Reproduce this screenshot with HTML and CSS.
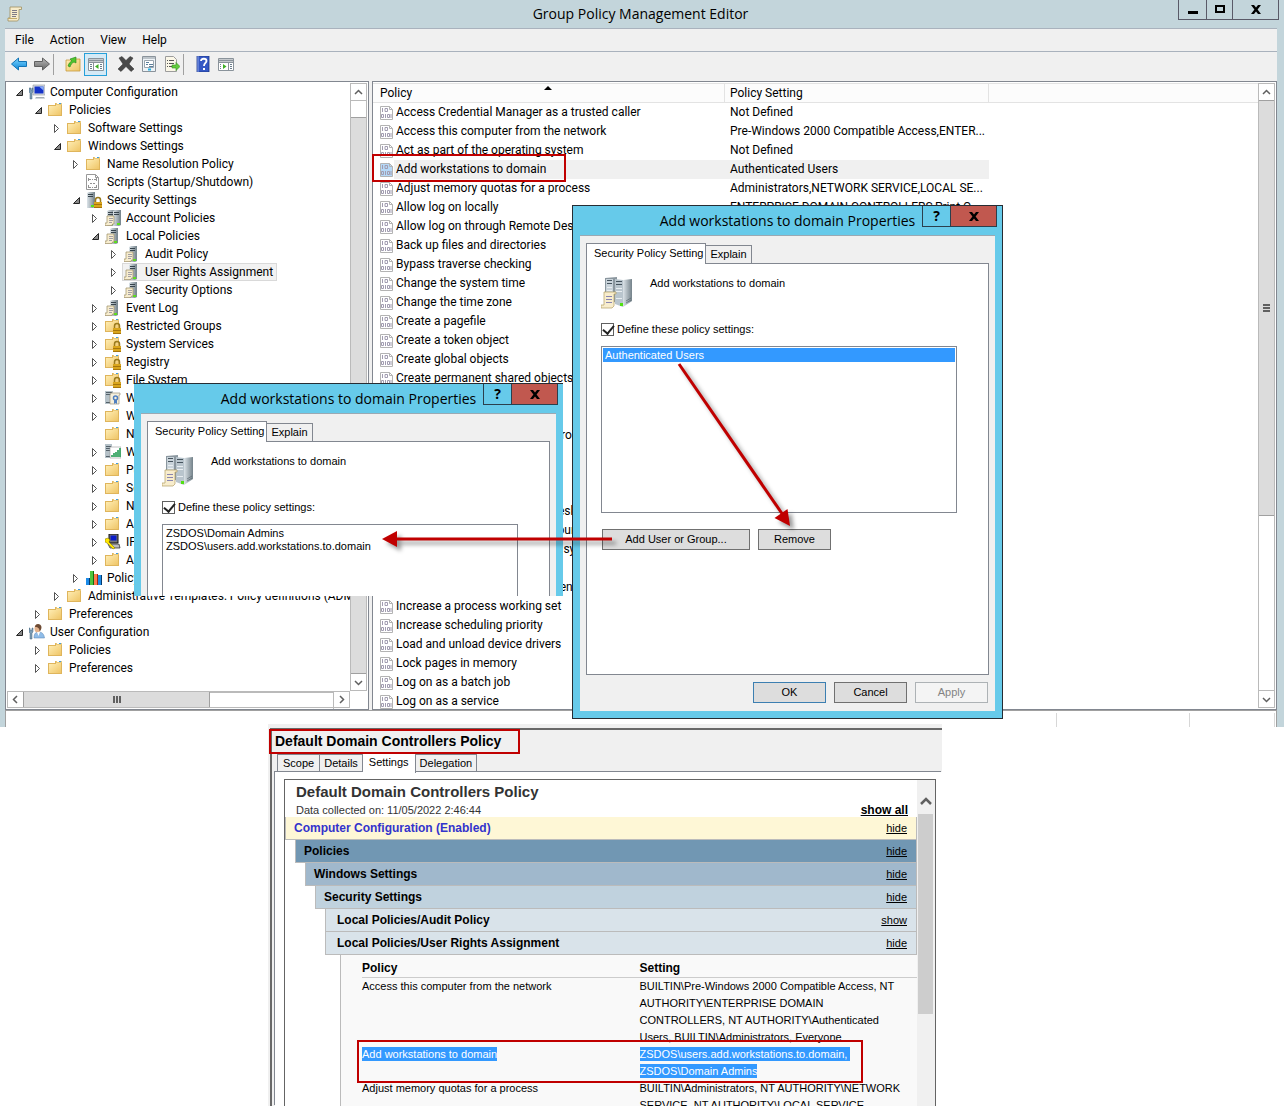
FILE: index.html
```
<!DOCTYPE html>
<html lang="en">
<head>
    <meta charset="UTF-8">
    <title>Group Policy Management Editor</title>
    <link rel="stylesheet" href="styles.css">
</head>
<body>
<!-- icon set -->
<svg class="defs" width="0" height="0" aria-hidden="true">
    <defs>
        <linearGradient id="gold" x1="0" y1="0" x2="1" y2="1"><stop offset="0" stop-color="#ffeeb5"/><stop offset="1" stop-color="#efc567"/></linearGradient>
        <linearGradient id="steel" x1="0" y1="0" x2="1" y2="0"><stop offset="0" stop-color="#dbe3e8"/><stop offset="1" stop-color="#74828a"/></linearGradient>
        <linearGradient id="sky" x1="0" y1="0" x2="0" y2="1"><stop offset="0" stop-color="#7fd6ff"/><stop offset="1" stop-color="#0a86d8"/></linearGradient>
        <linearGradient id="grey" x1="0" y1="0" x2="0" y2="1"><stop offset="0" stop-color="#bbb"/><stop offset="1" stop-color="#666"/></linearGradient>
    </defs>
    <symbol id="folder" viewBox="0 0 16 16">
        <path d="M0 3h7V1h7v13H0z" fill="#dfb55c"/><path d="M1 4h7V3h5v10H1z" fill="url(#gold)"/>
        <path d="M8 1h6v2H8z" fill="#e9c878"/><path d="M9 1h2v1H9z" fill="#fff"/><path d="M11 1h2v1h-2z" fill="#3f9be0"/>
    </symbol>
    <symbol id="lock" viewBox="0 0 16 16">
        <path d="M9.500 10V8a2.500 2.500 0 0 1 5 0v2" fill="none" stroke="#9a7a1d" stroke-width="1.500"/><path d="M8 10h8v6H8z" fill="#d9a51c"/><path d="M8 12.500h8M8 15.500h8" stroke="#a6750c"/>
    </symbol>
    <symbol id="folderlock" viewBox="0 0 16 16"><use href="#folder"/><use href="#lock"/></symbol>
    <symbol id="tower" viewBox="0 0 16 16">
        <path d="M5 1l2-1h6v15l-2 1H5z" fill="url(#steel)"/><path d="M6 2.500h5M6 4.500h5" stroke="#37444c"/><path d="M12 1v14" stroke="#7d8b93"/><path d="M9 13h3v2H9z" fill="#5be01a"/>
    </symbol>
    <symbol id="scroll" viewBox="0 0 16 16">
        <path d="M2 6h7v8H7.500L7 15.500H0V13h2z" fill="#f7edcf" stroke="#9c8c63" stroke-width=".7"/><path d="M4 8.500h4M4 10.500h4M4 12.500h3" stroke="#8e8a9a" stroke-width=".8"/>
    </symbol>
    <symbol id="server" viewBox="0 0 16 16"><use href="#tower"/><use href="#scroll"/></symbol>
    <symbol id="servers" viewBox="0 0 16 16"><use href="#tower" x="-3"/><use href="#tower" x="3"/><use href="#scroll"/></symbol>
    <symbol id="serverlock" viewBox="0 0 16 16"><use href="#tower" x="-4"/><use href="#lock"/></symbol>
    <symbol id="script" viewBox="0 0 16 16">
        <path d="M.5.500h9l3 3v12H.5z" fill="#fff" stroke="#999"/><path d="M9.500.500v3h3" fill="none" stroke="#999"/><path d="M3 5.500h2M6 5.500h1M8 5.500h2M3 13.500h2M6 13.500h1M8 13.500h2M2.500 4v3M10.500 4v3M2.500 11v3M10.500 11v3M4 9.500h2M7 9.500h2" stroke="#777" stroke-width=".8"/>
    </symbol>
    <symbol id="computer" viewBox="0 0 16 16">
        <path d="M4 1h12v10H4z" fill="#d9dde2" stroke="#8d969e" stroke-width=".6"/><path d="M5.500 2.500h9v7h-9z" fill="#1533c9"/><path d="M10 2.500h4.500v4z" fill="#86aaf8"/><path d="M7 13h8l1 1.500H6z" fill="#a3adb5"/><path d="M0 4h2v2h1V4h1v4L3 9v6H1V9L0 8z" fill="#7d9db5" stroke="#46667c" stroke-width=".5"/>
    </symbol>
    <symbol id="user" viewBox="0 0 16 16">
        <path d="M5 14c0-5 2-6 5-6s5 2 5.500 6z" fill="#8fbce8" stroke="#537fae" stroke-width=".5"/><ellipse cx="8.500" cy="4.500" rx="3" ry="4" fill="#e3b28c"/><path d="M6 3C6-1 12-1 12.500 3c0 2-1 4-2 4 0-2-1-4-4.500-4z" fill="#6d4a33"/><path d="M8 8l1.500 4L11 8z" fill="#fff"/><path d="M0 4h1v2h2V4h1v4L3 9v6H1V9L0 8z" fill="#7d9db5" stroke="#46667c" stroke-width=".5"/>
    </symbol>
    <symbol id="wired" viewBox="0 0 16 16">
        <path d="M0 1h8v13H0z" fill="#b5c1c8"/><path d="M1 2.500h6M1 4.500h6M1 12.500h5" stroke="#536069"/><path d="M6 3h9v2h-1v9H5V5z" fill="#f5efdc" stroke="#9b947c" stroke-width=".7"/><circle cx="10.500" cy="8" r="2" fill="none" stroke="#4f7fc0" stroke-width="1.500"/><path d="M9 10v4l1.500-1 1.500 1v-4" fill="#4f7fc0"/>
    </symbol>
    <symbol id="signal" viewBox="0 0 16 16">
        <path d="M0 0h7v14H0z" fill="#b5c1c8"/><path d="M1 2.500h5M1 4.500h5M1 6.500h4M1 12.500h4" stroke="#536069"/><path d="M5 3h11v11H5z" fill="#fff" stroke="#999" stroke-width=".6"/><path d="M7 13v-2M9 13v-4M11 13V8M13 13V6M15 13V4" stroke="#159447" stroke-width="1.500"/>
    </symbol>
    <symbol id="ipsec" viewBox="0 0 16 16">
        <path d="M4 0h9v9H4z" fill="#777" stroke="#111"/><path d="M5.500 1.500h6v5h-6z" fill="#0a1cc8"/><path d="M3 10h11l1 4H5z" fill="#bbb" stroke="#222" stroke-width=".7"/><path d="M0 5l3-1 2 2-1 2 6 6-2 1-6-6-2-1z" fill="#ffe600" stroke="#776a00" stroke-width=".5"/>
    </symbol>
    <symbol id="bars" viewBox="0 0 16 16">
        <path d="M0 8h3v7H0z" fill="#1c8be8"/><path d="M3 8h1v7H3z" fill="#063a6b"/><path d="M4 1h3v14H4z" fill="#4fc43c"/><path d="M7 1h1v14H7z" fill="#136a12"/><path d="M8 4h3v11H8z" fill="#ff7a4c"/><path d="M11 4h1v11h-1z" fill="#a32d10"/><path d="M12 5h3v10h-3z" fill="#1c8be8"/><path d="M15 5h1v10h-1z" fill="#063a6b"/>
    </symbol>
    <symbol id="bits" viewBox="0 0 13 14">
        <path class="paper" d="M.5.500h9l3 3v10H.5z"/><path d="M9.500.500v3h3" fill="none" stroke="#b3b3b3"/>
        <g fill="none" stroke="#a19cb0"><path d="M2.500 2v4M5 2.500h2.500v3H5zM5.500 8v4M11 8v4"/><path d="M1.500 8.500h2v3h-2zM7.500 8.500h2v3h-2z"/></g>
    </symbol>
    <symbol id="gpo" viewBox="0 0 16 16">
        <path d="M3 1h11.500v2.500H12V13l-1.500 2H1v-3h2z" fill="#f7eccb" stroke="#a0905f" stroke-width=".8"/><path d="M5 4.500h5M5 6.500h5M5 8.500h5M5 10.500h4" stroke="#7f7b86"/><path d="M1 12.500h9" stroke="#c2ab6a"/>
    </symbol>
    <symbol id="bigserver" viewBox="0 0 32 32">
        <path d="M4 1l12-1v26L4 22z" fill="#8b979f"/><path d="M5 2h7v20H5z" fill="#c9d3da"/><path d="M6 3.500h5M6 6.500h5" stroke="#46545e"/><path d="M6 10.500h5M6 13.500h5" stroke="#e9eef1"/>
        <path d="M14 2l8 1v27l-8-3z" fill="#b9c5cd"/><path d="M15 4.500h6M15 7.500h6" stroke="#46545e"/><path d="M15 11.500h6M15 14.500h6M15 21.500h6" stroke="#e9eef1"/><path d="M22 3l9-1v22l-9 6z" fill="url(#steel)"/><path d="M25 24l5-3M25 26l5-3" stroke="#59656d" stroke-width=".7"/><path d="M19 26h3v3h-3z" fill="#52e012"/>
        <path d="M3 15h12v2h-2v12l-2 2H0v-3h3z" fill="#f8edcd" stroke="#b39d63" stroke-width=".7"/><path d="M5 19.500h6M5 22.500h6M5 25.500h6" stroke="#8985b0"/>
    </symbol>
    <symbol id="up" viewBox="0 0 9 9"><path d="M1 6l3.500-3.500L8 6" fill="none" stroke="#606060" stroke-width="1.500"/></symbol>
    <symbol id="close" viewBox="0 0 10 9"><path d="M0 0h3l2 2.500L7 0h3L6.600 4.500 10 9H7L5 6.500 3 9H0l3.400-4.500z" fill="#000"/></symbol>
</svg>

<main class="desktop">
    <section class="window">
        <header class="titlebar">
            <svg class="ico"><use href="#gpo"/></svg>
            <h1>Group Policy Management Editor</h1>
            <div class="caption">
                <button aria-label="Minimize"><svg width="10" height="9"><path d="M0 6h10v3H0z"/></svg></button>
                <button class="narrow" aria-label="Maximize"><svg width="10" height="9"><path d="M1 1h8v6H1z" fill="none" stroke="#000" stroke-width="2"/></svg></button>
                <button class="wide" aria-label="Close"><svg width="10" height="9"><use href="#close"/></svg></button>
            </div>
        </header>
        <nav class="menu">
            <button>File</button>
            <button>Action</button>
            <button>View</button>
            <button>Help</button>
        </nav>
        <div class="toolbar">
            <button aria-label="Back"><svg class="ico" viewBox="0 0 16 16"><path d="M0.500 8l7-6v3.500h8v5h-8V14z" fill="url(#sky)" stroke="#1374b5"/></svg></button>
            <button aria-label="Forward"><svg class="ico" viewBox="0 0 16 16"><path d="M15.500 8l-7-6v3.500h-8v5h8V14z" fill="url(#grey)" stroke="#606060"/></svg></button>
            <i class="sep"></i>
            <button aria-label="Up one level"><svg class="ico" viewBox="0 0 16 16"><path d="M1 4h7l1-1h6v12H1z" fill="url(#gold)" stroke="#c79a3c" stroke-width=".8"/><path d="M3 10c1-3 2-4 4-5L5 3l6-2v6L9 6c-2 1-3 2-4 5z" fill="#4fc52e" stroke="#25861a" stroke-width=".6"/></svg></button>
            <button class="on" aria-label="Show/Hide Console Tree"><svg class="ico" viewBox="0 0 16 16"><path d="M.5 2.500h15v12H.5z" fill="#fff" stroke="#8a939b"/><path d="M1 4.500h14" stroke="#8a939b" stroke-width="2"/><path d="M5.500 6v8M1 6.500h14" stroke="#8a939b"/><path d="M2 8.500h2M2 10.500h2M2 12.500h2M12 8.500h2M12 10.500h2M12 12.500h2" stroke="#6b7d8c"/><path d="M10.500 8v5L7 10.500z" fill="#3eae25"/></svg></button>
            <i class="gap"></i>
            <button aria-label="Delete"><svg class="ico" viewBox="0 0 16 16"><path d="M1 2l3-1.500 4 4 4-4L15 2l-4 6 5 5-3 2.500-5-5-5 5L0 13l5-5z" fill="#4a4a4a" stroke="#2a2a2a" stroke-width=".5"/></svg></button>
            <button aria-label="Properties"><svg class="ico" viewBox="0 0 16 16"><path d="M1.500.500h13v15h-13z" fill="#eef3f7" stroke="#8a939b"/><path d="M2 2h12" stroke="#8a939b"/><path d="M3.500 4.500h9v7h-9z" fill="#fff" stroke="#9aa5ae"/><path d="M5 6.500h3M5 8.500h2M8 8.500h4M8 10.500h4" stroke="#5c7f9c"/><path d="M7 13.500h3" stroke="#26b4e6" stroke-width="2"/></svg></button>
            <button aria-label="Export List"><svg class="ico" viewBox="0 0 16 16"><path d="M1.500.500h8l3 3v12h-11z" fill="#fbf7e8" stroke="#9c9c9c"/><path d="M3 4.500h1M5 4.500h5M3 7.500h1M5 7.500h5M3 10.500h1M5 10.500h4" stroke="#555"/><path d="M8 9h4V6.500l4 4-4 4V12H8z" fill="#62cb3d" stroke="#37941e" stroke-width=".6"/></svg></button>
            <i class="sep"></i>
            <button aria-label="Help"><svg class="ico" viewBox="0 0 16 16"><path d="M2 0h12v16H2z" fill="#3558c4" stroke="#1b3484" stroke-width=".8"/><path d="M3 0v16" stroke="#8ba3ea"/><path d="M6 5c0-3 5.500-3 5.500 0 0 2-2.500 2-2.500 5" fill="none" stroke="#fff" stroke-width="1.800"/><path d="M8 12h2v2H8z" fill="#fff"/></svg></button>
            <button aria-label="Show/Hide Action Pane"><svg class="ico" viewBox="0 0 16 16"><path d="M.5 2.500h15v12H.5z" fill="#fff" stroke="#8a939b"/><path d="M1 4.500h14" stroke="#8a939b" stroke-width="2"/><path d="M10.500 6v8M1 6.500h14" stroke="#8a939b"/><path d="M2 8.500h1M2 10.500h1M2 12.500h1M12 8.500h2M12 10.500h2M12 12.500h2" stroke="#6b7d8c"/><path d="M5 8v5l3.500-2.500z" fill="#3eae25"/></svg></button>
        </div>

        <div class="panes">
            <div class="pane tree-pane">
                <div class="tree-area">
                    <ul class="tree" id="tree"></ul>
                    <div class="vscroll">
                        <button aria-label="Scroll up"><svg width="9" height="9"><use href="#up"/></svg></button>
                        <i class="space"></i>
                        <i class="thumb"></i>
                        <button aria-label="Scroll down"><svg class="down" width="9" height="9"><use href="#up"/></svg></button>
                    </div>
                </div>
                <div class="hscroll">
                    <button aria-label="Scroll left"><svg class="left" width="9" height="9"><use href="#up"/></svg></button>
                    <i class="thumb"><b class="grip"></b></i>
                    <i class="space"></i>
                    <button aria-label="Scroll right"><svg class="right" width="9" height="9"><use href="#up"/></svg></button>
                </div>
            </div>
            <div class="pane list-pane">
                <div class="list-area">
                    <table class="list">
                        <colgroup><col class="c1"><col class="c2"><col></colgroup>
                        <thead><tr><th class="sorted">Policy</th><th>Policy Setting</th><th></th></tr></thead>
                        <tbody id="list"></tbody>
                    </table>
                </div>
                <div class="vscroll">
                    <button aria-label="Scroll up"><svg width="9" height="9"><use href="#up"/></svg></button>
                    <i class="thumb"><b class="grip"></b></i>
                    <i class="space"></i>
                    <button aria-label="Scroll down"><svg class="down" width="9" height="9"><use href="#up"/></svg></button>
                </div>
            </div>
        </div>
        <footer class="status"><i></i><i></i><i></i></footer>
    </section>

    <section class="report">
        <h2 class="report-title">Default Domain Controllers Policy</h2>
        <div class="tabs">
            <button class="tab">Scope</button>
            <button class="tab">Details</button>
            <button class="tab active">Settings</button>
            <button class="tab">Delegation</button>
        </div>
        <div class="sheet">
            <div class="frame">
                <div class="doc">
                    <h3>Default Domain Controllers Policy</h3>
                    <p class="collected"><span>Data collected on: 11/05/2022 2:46:44</span><a href="#">show all</a></p>
                    <div class="band b0"><span>Computer Configuration (Enabled)</span><a href="#">hide</a></div>
                    <div class="band b1"><span>Policies</span><a href="#">hide</a></div>
                    <div class="band b2"><span>Windows Settings</span><a href="#">hide</a></div>
                    <div class="band b3"><span>Security Settings</span><a href="#">hide</a></div>
                    <div class="band b4"><span>Local Policies/Audit Policy</span><a href="#">show</a></div>
                    <div class="band b4"><span>Local Policies/User Rights Assignment</span><a href="#">hide</a></div>
                    <div class="rights">
                        <table>
                            <thead><tr><th>Policy</th><th>Setting</th></tr></thead>
                            <tbody>
                                <tr><td>Access this computer from the network</td><td>BUILTIN\Pre-Windows 2000 Compatible Access, NT<br>AUTHORITY\ENTERPRISE DOMAIN<br>CONTROLLERS, NT AUTHORITY\Authenticated<br>Users, BUILTIN\Administrators, Everyone</td></tr>
                                <tr><td><mark>Add workstations to domain</mark></td><td><mark>ZSDOS\users.add.workstations.to.domain, </mark><br><mark>ZSDOS\Domain Admins</mark></td></tr>
                                <tr><td>Adjust memory quotas for a process</td><td>BUILTIN\Administrators, NT AUTHORITY\NETWORK<br>SERVICE, NT AUTHORITY\LOCAL SERVICE</td></tr>
                            </tbody>
                        </table>
                    </div>
                </div>
                <div class="docscroll">
                    <button aria-label="Scroll up"><svg width="12" height="12"><path d="M1 9l5-5 5 5" fill="none" stroke="#606060" stroke-width="2.500"/></svg></button>
                    <i></i>
                </div>
            </div>
        </div>
    </section>

    <!-- dialog with the new members, cut off at the bottom -->
    <section class="dialog dialog-after" role="dialog">
        <header class="dialog-title">
            <h2>Add workstations to domain Properties</h2>
            <div class="caption">
                <button aria-label="Help">?</button>
                <button class="wide red" aria-label="Close"><svg width="10" height="9"><use href="#close"/></svg></button>
            </div>
        </header>
        <div class="dialog-body">
            <div class="tabs">
                <button class="tab active">Security Policy Setting</button>
                <button class="tab">Explain</button>
            </div>
            <div class="page">
                <div class="subject"><svg width="32" height="32"><use href="#bigserver"/></svg><span>Add workstations to domain</span></div>
                <label class="check"><input type="checkbox" checked>Define these policy settings:</label>
                <ul class="listbox" role="listbox">
                    <li>ZSDOS\Domain Admins</li>
                    <li>ZSDOS\users.add.workstations.to.domain</li>
                </ul>
            </div>
        </div>
    </section>

    <section class="dialog dialog-before" role="dialog">
        <header class="dialog-title">
            <h2>Add workstations to domain Properties</h2>
            <div class="caption">
                <button aria-label="Help">?</button>
                <button class="wide red" aria-label="Close"><svg width="10" height="9"><use href="#close"/></svg></button>
            </div>
        </header>
        <div class="dialog-body">
            <div class="tabs">
                <button class="tab active">Security Policy Setting</button>
                <button class="tab">Explain</button>
            </div>
            <div class="page">
                <div class="subject"><svg width="32" height="32"><use href="#bigserver"/></svg><span>Add workstations to domain</span></div>
                <label class="check"><input type="checkbox" checked>Define these policy settings:</label>
                <ul class="listbox" role="listbox">
                    <li class="selected">Authenticated Users</li>
                </ul>
                <div class="members">
                    <button class="btn btn-wide">Add User or Group...</button>
                    <button class="btn">Remove</button>
                </div>
            </div>
            <footer class="actions">
                <button class="btn default">OK</button>
                <button class="btn">Cancel</button>
                <button class="btn" disabled>Apply</button>
            </footer>
        </div>
    </section>

    <!-- annotations -->
    <div class="mark mark-row"></div>
    <div class="mark mark-title"></div>
    <div class="mark mark-users"></div>
    <svg class="arrows" width="460" height="200" viewBox="0 0 460 200">
        <g stroke="#c00000" stroke-width="3" fill="#c00000">
            <path d="M299 4L403 155"/><path d="M410 166l-15.500-8 13-9z" stroke="none"/>
            <path d="M232 179H16"/><path d="M2 179l15-8v16z" stroke="none"/>
        </g>
    </svg>
</main>

<script>
    //depth, state (o = open, c = closed, empty = leaf), icon, label
    var nodes = [
        [0, 'o', 'computer', 'Computer Configuration'],
        [1, 'o', 'folder', 'Policies'],
        [2, 'c', 'folder', 'Software Settings'],
        [2, 'o', 'folder', 'Windows Settings'],
        [3, 'c', 'folder', 'Name Resolution Policy'],
        [3, '', 'script', 'Scripts (Startup/Shutdown)'],
        [3, 'o', 'serverlock', 'Security Settings'],
        [4, 'c', 'servers', 'Account Policies'],
        [4, 'o', 'server', 'Local Policies'],
        [5, 'c', 'server', 'Audit Policy'],
        [5, 'c', 'server', 'User Rights Assignment'],
        [5, 'c', 'server', 'Security Options'],
        [4, 'c', 'server', 'Event Log'],
        [4, 'c', 'folderlock', 'Restricted Groups'],
        [4, 'c', 'folderlock', 'System Services'],
        [4, 'c', 'folderlock', 'Registry'],
        [4, 'c', 'folderlock', 'File System'],
        [4, 'c', 'wired', 'Wired Network (IEEE 802.3) Policies'],
        [4, 'c', 'folder', 'Windows Firewall with Advanced Security'],
        [4, '', 'folder', 'Network List Manager Policies'],
        [4, 'c', 'signal', 'Wireless Network (IEEE 802.11) Policies'],
        [4, 'c', 'folder', 'Public Key Policies'],
        [4, 'c', 'folder', 'Software Restriction Policies'],
        [4, 'c', 'folder', 'Network Access Protection'],
        [4, 'c', 'folder', 'Application Control Policies'],
        [4, 'c', 'ipsec', 'IP Security Policies on Active Directory'],
        [4, 'c', 'folder', 'Advanced Audit Policy Configuration'],
        [3, 'c', 'bars', 'Policy-based QoS'],
        [2, 'c', 'folder', 'Administrative Templates: Policy definitions (ADMX files)'],
        [1, 'c', 'folder', 'Preferences'],
        [0, 'o', 'user', 'User Configuration'],
        [1, 'c', 'folder', 'Policies'],
        [1, 'c', 'folder', 'Preferences']
    ];
    var policies = [
        ['Access Credential Manager as a trusted caller', 'Not Defined'],
        ['Access this computer from the network', 'Pre-Windows 2000 Compatible Access,ENTER...'],
        ['Act as part of the operating system', 'Not Defined'],
        ['Add workstations to domain', 'Authenticated Users'],
        ['Adjust memory quotas for a process', 'Administrators,NETWORK SERVICE,LOCAL SE...'],
        ['Allow log on locally', 'ENTERPRISE DOMAIN CONTROLLERS,Print O...'],
        ['Allow log on through Remote Desktop Services'],
        ['Back up files and directories'],
        ['Bypass traverse checking'],
        ['Change the system time'],
        ['Change the time zone'],
        ['Create a pagefile'],
        ['Create a token object'],
        ['Create global objects'],
        ['Create permanent shared objects'],
        ['Create symbolic links'],
        ['Debug programs'],
        ['Deny access to this computer from the network'],
        ['Deny log on as a batch job'],
        ['Deny log on as a service'],
        ['Deny log on locally'],
        ['Deny log on through Remote Desktop Services'],
        ['Enable computer and user accounts to be trusted'],
        ['Force shutdown from a remote system'],
        ['Generate security audits'],
        ['Impersonate a client after authentication'],
        ['Increase a process working set'],
        ['Increase scheduling priority'],
        ['Load and unload device drivers'],
        ['Lock pages in memory'],
        ['Log on as a batch job'],
        ['Log on as a service']
    ];

    function icon(name) {
        return '<svg class="ico"><use href="#' + name + '"/></svg>';
    }

    //tree on the left
    var twisty = {
        o: '<button class="twisty" aria-label="Collapse"><svg width="7" height="7"><path d="M6.500.500v6h-6z" fill="#8a8a8a" stroke="#262626"/></svg></button>',
        c: '<button class="twisty" aria-label="Expand"><svg width="6" height="9"><path d="M.5.500v8l4-4z" fill="#fff" stroke="#555"/></svg></button>'
    };
    document.getElementById('tree').innerHTML = nodes.map(function (n) {
        var selected = n[3] == 'User Rights Assignment' ? ' selected' : '';
        return '<li style="padding-left:' + n[0] * 19 + 'px">' + (twisty[n[1]] || '<i class="twisty"></i>') +
            '<span class="node' + selected + '">' + icon(n[2]) + n[3] + '</span></li>';
    }).join('');

    //policy list on the right
    document.getElementById('list').innerHTML = policies.map(function (p) {
        var selected = p[0] == 'Add workstations to domain' ? ' class="selected"' : '';
        return '<tr' + selected + '><td><span class="cell">' + icon('bits') + '<span>' + p[0] + '</span></span></td><td>' + (p[1] || '') + '</td><td></td></tr>';
    }).join('');
</script>
</body>
</html>
```
FILE: styles.css
```
* {
    box-sizing: border-box;
}
body {
    margin: 0;
    background: #fff;
    color: #000;
    font: 12px/18px Roboto, "Open Sans", sans-serif;
}
h1, h2, h3, p, ul {
    margin: 0;
    padding: 0;
    font-weight: normal;
}
ul {
    list-style: none;
}
button {
    margin: 0;
    padding: 0;
    border: 0;
    background: none;
    color: inherit;
    font: inherit;
}
i, b {
    display: block;
}
svg {
    display: block;
    flex: none;
}
.defs {
    position: absolute;
}
.ico {
    width: 16px;
    height: 16px;
}
.paper {
    fill: var(--paper, #fff);
    stroke: #b3b3b3;
}
.desktop {
    position: relative;
    display: flex;
    flex-direction: column;
    height: 100vh;
    overflow: hidden;
}

/* main window */
.window {
    flex: none;
    padding: 0 7px 0 5px;
    background: #c3d5db;
}
.titlebar {
    display: flex;
    align-items: center;
    height: 28px;
    padding-left: 2px;
}
.titlebar h1 {
    flex: 1;
    padding-left: 80px;
    font: 14px/20px "Open Sans", "Noto Sans", sans-serif;
    text-align: center;
}
.caption {
    display: flex;
    align-self: flex-start;
    margin-right: -2px;
    border: 1px solid #5a5a68;
    border-top: 0;
}
.caption button {
    display: flex;
    align-items: center;
    justify-content: center;
    width: 27px;
    height: 19px;
}
.caption button + button {
    border-left: 1px solid #5a5a68;
}
.caption .narrow {
    width: 26px;
}
.caption .wide {
    width: 46px;
}
.menu {
    display: flex;
    gap: 16px;
    height: 24px;
    padding-left: 10px;
    border-top: 1px solid #a9b2bd;
    border-bottom: 1px solid #a9b2bd;
    background: #f0f0f0;
}
.toolbar {
    display: flex;
    align-items: center;
    height: 29px;
    padding: 0 2px 5px;
    background: #f0f0f0;
}
.toolbar button {
    display: flex;
    align-items: center;
    justify-content: center;
    width: 23px;
    height: 23px;
    border: 1px solid transparent;
}
.toolbar .on {
    border-color: #26a0da;
    background: #d5eaf6;
}
.toolbar .sep {
    width: 1px;
    height: 21px;
    margin-right: 7px;
    background: #a0a0a0;
}
.toolbar .gap {
    width: 7px;
}
.panes {
    display: flex;
    gap: 3px;
    background: #f0f0f0;
}
.pane {
    border: 1px solid #828790;
    background: #fff;
    overflow: hidden;
}
.tree-pane {
    width: 364px;
    flex: none;
    padding: 1px;
}
.tree-area {
    display: flex;
}
.tree {
    flex: 1;
    min-width: 0;
    padding: 0 0 14px 4px;
    overflow: hidden;
}
.tree li {
    display: flex;
    height: 18px;
    white-space: nowrap;
}
.twisty {
    display: flex;
    flex: none;
    align-items: center;
    justify-content: center;
    width: 16px;
    padding-top: 1px;
}
.node {
    display: flex;
    align-items: center;
    gap: 5px;
    padding: 0 3px 0 1px;
    border: 1px solid transparent;
    line-height: 16px;
}
.node.selected {
    border-color: #d9d9d9;
    background: #f2f2f2;
}

/* scroll bars */
.vscroll {
    display: flex;
    flex: none;
    flex-direction: column;
    width: 17px;
    border: 1px solid #bababa;
    background: #fff;
}
.vscroll button, .hscroll button {
    display: flex;
    flex: none;
    align-items: center;
    justify-content: center;
    width: 15px;
    height: 16px;
}
.vscroll .thumb {
    flex: 1;
    border-top: 1px solid #a0a0a0;
    border-bottom: 1px solid #a0a0a0;
    background: #dcdcdc;
}
.tree-pane .space {
    height: 17px;
    border-top: 1px solid #bababa;
}
.list-pane .vscroll {
    margin: 1px 1px 1px 0;
}
.list-pane .vscroll .thumb {
    flex: 417;
    display: flex;
    align-items: center;
    justify-content: center;
}
.list-pane .space {
    flex: 175;
    border-bottom: 1px solid #bababa;
}
.hscroll {
    display: flex;
    height: 17px;
    margin-right: 17px;
    border: 1px solid #bababa;
}
.hscroll button {
    height: 15px;
}
.hscroll .thumb {
    display: flex;
    flex: 187;
    align-items: center;
    justify-content: center;
    border: solid #a0a0a0;
    border-width: 0 1px;
    background: #dcdcdc;
}
.hscroll .space {
    flex: 124;
    border-right: 1px solid #bababa;
}
.grip {
    width: 7px;
    height: 8px;
    background: repeating-linear-gradient(#606060 0 2px, transparent 2px 3px);
}
.hscroll .grip {
    width: 8px;
    height: 7px;
    background: repeating-linear-gradient(90deg, #606060 0 2px, transparent 2px 3px);
}
.down {
    transform: rotate(180deg);
}
.left {
    transform: rotate(-90deg);
}
.right {
    transform: rotate(90deg);
}

/* policy list */
.list-pane {
    display: flex;
    flex: 1;
    min-width: 0;
}
.list-area {
    flex: 1;
    min-width: 0;
    margin: 1px 0 -5px;
}
.list {
    width: 100%;
    border-spacing: 0;
    table-layout: fixed;
}
.list .c1 {
    width: 352px;
}
.list .c2 {
    width: 264px;
}
.list th {
    position: relative;
    height: 20px;
    padding: 0 7px;
    border: solid #e3e3e3;
    border-width: 1px 1px 1px 0;
    background: #fcfcfc;
    font-weight: normal;
    line-height: 18px;
    text-align: left;
}
.list th + th {
    padding-left: 5px;
}
.list th:last-child {
    border-right: 0;
}
.list .sorted::after {
    position: absolute;
    top: 2px;
    left: 50%;
    margin-left: -5px;
    border: 4px solid transparent;
    border-top: 0;
    border-bottom-color: #000;
    content: "";
}
.list td {
    height: 19px;
    padding: 0 5px;
    line-height: 19px;
    white-space: nowrap;
}
.list td:first-child {
    padding: 0 0 0 7px;
}
.cell {
    display: flex;
    align-items: center;
    gap: 1px;
}
.cell .ico {
    width: 13px;
    height: 14px;
}
.cell span {
    flex: 1;
    padding-left: 2px;
}
.list .selected .cell span, .list .selected td:nth-child(2) {
    background: #f0f0f0;
}
.list .selected .ico {
    --paper: #b5d8f7;
}
.status {
    display: flex;
    justify-content: flex-end;
    height: 17px;
    padding: 2px 1px 0 0;
    border: solid #a0a0a0;
    border-width: 1px 1px 0;
    background: #fff;
}
.status i {
    width: 133px;
    border-right: 1px solid #d7d7d7;
}
.status i:last-child {
    width: 85px;
}

/* property dialogs */
.dialog {
    position: absolute;
    width: 431px;
    padding: 0 7px;
    border: 1px solid #262c33;
    background: #66caea;
    font: 11px/13px "Liberation Sans", Arial, sans-serif;
}
.dialog-before {
    top: 205px;
    left: 572px;
    padding-bottom: 7px;
}
.dialog-after {
    top: 383px;
    left: 134px;
    width: 429px;
    height: 213px;
    border-width: 1px 0 0;
    overflow: hidden;
}
.dialog-title {
    position: relative;
    height: 29px;
}
.dialog-title h2 {
    padding-top: 4px;
    font: 14px/22px "Open Sans", "Noto Sans", sans-serif;
    text-align: center;
}
.dialog-title .caption {
    position: absolute;
    top: 0;
    right: 0;
    border-color: #2b3f4d;
}
.dialog-title .caption button {
    height: 20px;
    border-color: #2b3f4d;
    font: bold 14px/20px "Open Sans", "Noto Sans", sans-serif;
}
.dialog-title .red {
    background: #c1584f;
}
.dialog-body {
    padding: 7px 6px 8px;
    border-top: 1px solid #9aa9b3;
    background: #f0f0f0;
}
.tabs {
    display: flex;
    align-items: flex-end;
    height: 20px;
}
.tab {
    height: 18px;
    padding: 0 4px;
    border: 1px solid #828790;
    border-bottom: 0;
    background: #f0f0f0;
}
.tab + .tab {
    border-left: 0;
}
.tab.active {
    position: relative;
    height: 21px;
    margin-bottom: -1px;
    padding: 0 2px 2px 7px;
    border: 1px solid #828790;
    border-bottom: 0;
    background: #fff;
}
.page {
    min-height: 412px;
    padding: 13px 14px;
    border: 1px solid #828790;
    background: #fff;
}
.subject {
    display: flex;
    gap: 17px;
}
.check {
    display: flex;
    align-items: center;
    gap: 3px;
    margin-top: 14px;
}
.check input {
    appearance: none;
    width: 13px;
    height: 13px;
    margin: 0;
    border: 1px solid #606060;
    background: #fff;
}
.check input:checked::after {
    display: block;
    width: 5px;
    height: 9px;
    margin: -1px 0 0 3px;
    border: solid #222;
    border-width: 0 2px 2px 0;
    transform: rotate(40deg);
    content: "";
}
.listbox {
    height: 167px;
    margin: 10px 17px 0 0;
    padding: 1px;
    border: 1px solid #828790;
    background: #fff;
}
.dialog-after .listbox {
    padding-top: 2px;
}
.listbox li {
    padding: 0 2px;
}
.listbox .selected {
    background: #3399ff;
    color: #fff;
    line-height: 14px;
}
.members {
    display: flex;
    gap: 8px;
    margin: 16px 1px 0;
}
.btn {
    width: 73px;
    height: 21px;
    border: 1px solid #707070;
    background: #ddd;
}
.btn-wide {
    width: 148px;
}
.btn.default {
    border-color: #3c7fb1;
}
.btn:disabled {
    border-color: #adb2b5;
    background: #f4f4f4;
    color: #838383;
}
.actions {
    display: flex;
    justify-content: flex-end;
    gap: 8px;
    padding: 7px 1px 0 0;
}

/* settings report */
.report {
    position: relative;
    display: flex;
    flex: 1;
    flex-direction: column;
    min-height: 0;
    margin: -3px 342px 0 268px;
    padding: 4px 0 0 2px;
    background: #f0f0f0;
    font: 11px/17px "Liberation Sans", Arial, sans-serif;
    overflow: hidden;
}
.report-title {
    padding-left: 3px;
    border-top: 2px solid #696969;
    border-left: 2px solid #696969;
    font-size: 14px;
    font-weight: bold;
    line-height: 22px;
}
.report .tabs {
    padding-left: 5px;
    border-left: 2px solid #696969;
}
.report .tab {
    padding: 0 5px;
    border-left: 1px solid #828790;
}
.report .tab + .tab {
    padding: 0 4px;
    border-left: 0;
}
.report .tab.active {
    padding: 0 6px 2px;
}
.sheet {
    display: flex;
    flex: 1;
    min-height: 0;
    padding: 0 0 0 3px;
    border-left: 2px solid #696969;
}
.frame {
    display: flex;
    flex: 1;
    min-height: 0;
    border: solid #fff;
    border-width: 7px 6px 0 9px;
    box-shadow: inset 1px 1px #646464, inset -1px 0 #646464, -1px -1px #828790;
}
.doc {
    flex: 1;
    min-height: 0;
    margin: 1px 0 0 1px;
    background: #fff;
    overflow: hidden;
}
.doc h3 {
    padding: 4px 0 0 11px;
    color: #333;
    font-size: 15px;
    font-weight: bold;
    line-height: 16px;
}
.collected {
    display: flex;
    justify-content: space-between;
    padding: 3px 9px 0 11px;
    color: #333;
    line-height: 14px;
}
.collected a {
    font-size: 12px;
    font-weight: bold;
}
.report a {
    color: #000;
}
.band {
    display: flex;
    justify-content: space-between;
    height: 23px;
    padding: 0 9px 0 8px;
    border: 1px solid #bbb;
    border-top: 0;
    line-height: 22px;
}
.band span {
    font-size: 12px;
    font-weight: bold;
}
.b0 {
    background: #fef7d6;
}
.b0 span {
    color: #3333cc;
}
.b1 {
    margin-left: 10px;
    background: #7197b3;
}
.b2 {
    margin-left: 20px;
    background: #a0b8cc;
}
.b3 {
    margin-left: 30px;
    background: #c0d2de;
}
.b4 {
    margin-left: 40px;
    padding-left: 11px;
    background: #d9e3ea;
}
.rights {
    margin-left: 55px;
    padding: 5px 0 0 21px;
    border-left: 1px solid #bbb;
    background: #f9f9f9;
}
.rights table {
    width: 100%;
    border-spacing: 0;
    table-layout: fixed;
}
.rights th {
    padding: 0;
    border-bottom: 1px solid #ccc;
    font-size: 12px;
    text-align: left;
}
.rights td {
    padding: 0;
    vertical-align: top;
    white-space: nowrap;
}
.rights mark {
    padding: 1px 0;
    background: #3399ff;
    color: #fff;
    white-space: pre;
}
.docscroll {
    flex: none;
    width: 19px;
    margin-top: 1px;
    padding: 15px 2px 0 1px;
    border-right: 1px solid #646464;
    background: #f0f0f0;
}
.docscroll button {
    display: block;
    margin: 0 2px 7px;
}
.docscroll i {
    height: 200px;
    background: #cdcdcd;
}

/* annotations */
.mark {
    position: absolute;
    border: 2px solid #c00000;
}
.mark-row {
    top: 154px;
    left: 372px;
    width: 194px;
    height: 28px;
}
.mark-title {
    top: 729px;
    left: 269px;
    width: 251px;
    height: 25px;
}
.mark-users {
    top: 1040px;
    left: 357px;
    width: 506px;
    height: 43px;
}
.arrows {
    position: absolute;
    top: 360px;
    left: 380px;
    filter: drop-shadow(4px 4px 2px rgba(0, 0, 0, .4));
}
```
